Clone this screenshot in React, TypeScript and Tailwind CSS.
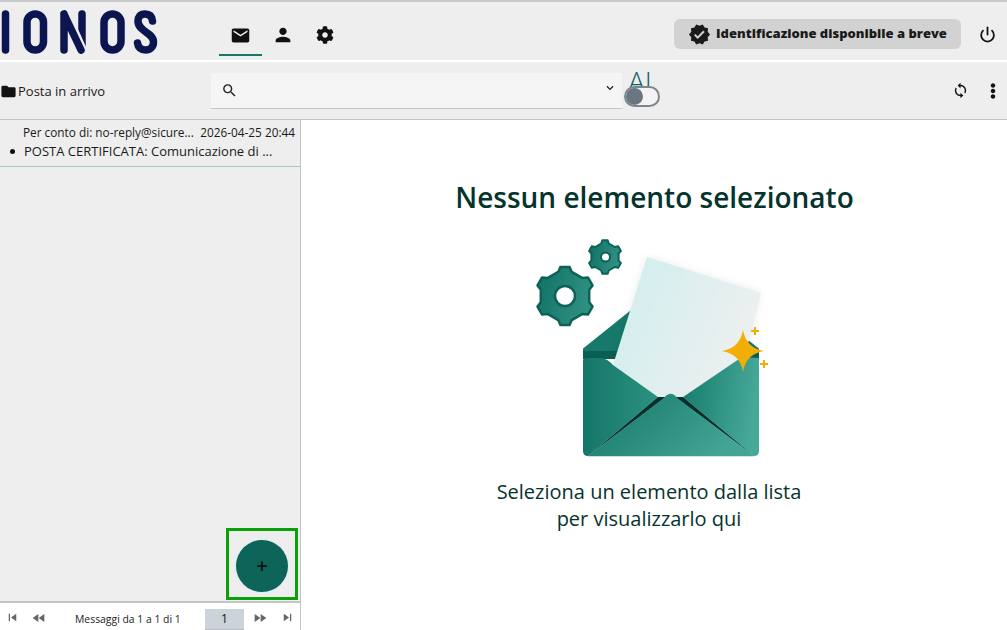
import { Power } from "lucide-react";
import {
	MdEmail,
	MdFastForward,
	MdFastRewind,
	MdFolder,
	MdPerson,
	MdSearch,
	MdSkipNext,
	MdSkipPrevious,
	MdSync,
	MdVerified,
} from "react-icons/md";
import { FaCog, FaChevronDown, FaEllipsisV } from "react-icons/fa";

const gearPath = (cx: number, cy: number, outer: number, inner: number, teeth: number) => {
	const pts: string[] = [];
	const step = (Math.PI * 2) / teeth;
	for (let i = 0; i < teeth; i++) {
		const a = i * step - Math.PI / 2;
		const list = [
			[a - step * 0.26, inner],
			[a - step * 0.15, outer],
			[a + step * 0.15, outer],
			[a + step * 0.26, inner],
		];
		list.forEach(([an, r]) => {
			pts.push(`${(cx + Math.cos(an) * r).toFixed(1)} ${(cy + Math.sin(an) * r).toFixed(1)}`);
		});
	}
	return "M" + pts.join("L") + "Z";
};

const Logo = () => (
	<svg width="158" height="44" viewBox="0 0 158 44" fill="none" stroke="#0b1550" strokeWidth="7.5" strokeLinecap="round" strokeLinejoin="round">
		<path d="M5.5 4V40" />
		<rect x="27" y="4" width="16.5" height="36" rx="8.25" />
		<path d="M82 4V40" />
		<path d="M65.5 3L84 44" stroke="#eeeeee" strokeWidth="9.5" strokeLinecap="butt" />
		<path d="M64 4V40M64 4L81 40" />
		<rect x="104" y="4" width="17" height="36" rx="8.5" />
		<path d="M152.5 11C152 6 149 4 145 4C140 4 138 7 138 11C138 22 153.500 22 153.500 32C153.500 37 150 40 145.500 40C141 40 138 37.500 137.500 33" />
	</svg>
);

const Illustration = () => (
	<svg width="260" height="235" viewBox="0 0 260 235">
		<defs>
			<linearGradient id="env" x1="0" y1="0" x2="1" y2="0.4">
				<stop offset="0" stopColor="#137567" />
				<stop offset="1" stopColor="#41a494" />
			</linearGradient>
			<linearGradient id="envL" x1="0" y1="0" x2="1" y2="0">
				<stop offset="0" stopColor="#147668" />
				<stop offset="1" stopColor="#2d9282" />
			</linearGradient>
			<linearGradient id="envR" x1="0" y1="0" x2="1" y2="0.2">
				<stop offset="0" stopColor="#167a6c" />
				<stop offset="1" stopColor="#45a898" />
			</linearGradient>
			<linearGradient id="paper" x1="0" y1="0.2" x2="1" y2="0.6">
				<stop offset="0" stopColor="#d0eeee" />
				<stop offset="1" stopColor="#efefef" />
			</linearGradient>
			<linearGradient id="gear" x1="0" y1="0" x2="1" y2="0.3">
				<stop offset="0" stopColor="#0f7063" />
				<stop offset="1" stopColor="#2f9082" />
			</linearGradient>
			<filter id="soft" x="-10%" y="-10%" width="120%" height="120%">
				<feGaussianBlur stdDeviation="4" />
			</filter>
		</defs>
		<path
			d={gearPath(45, 66, 29.5, 25, 6) + " M55 66A10 10 0 1 0 35 66A10 10 0 1 0 55 66Z"}
			fill="url(#gear)"
			fillRule="evenodd"
			stroke="#0c6256"
			strokeWidth="2.500"
			strokeLinejoin="round"
		/>
		<path
			d={gearPath(85, 27, 17, 14, 6) + " M90 27A4.500 4.500 0 1 0 81 27A4.500 4.500 0 1 0 90 27Z"}
			fill="url(#gear)"
			fillRule="evenodd"
			stroke="#0c6256"
			strokeWidth="2"
			strokeLinejoin="round"
		/>
		<path d="M64 119L150 50L238 119V128H64Z" fill="#17796b" strokeLinejoin="round" stroke="#17796b" strokeWidth="2" />
		<rect x="63" y="121" width="176" height="8" fill="#0a5f54" />
		<path d="M127 27L241 63L225 125L163 167H138L93 135Z" fill="#000" opacity="0.08" filter="url(#soft)" />
		<path d="M127 27L241 63L225 125L163 167H138L93 135Z" fill="url(#paper)" />
		<path d="M63 130Q63 128 70 128H80Q87 128 93 135L138 167L68 226Q63 226 63 221Z" fill="url(#envL)" />
		<path d="M239 128V221Q239 226 234 226L163 167L222 127Z" fill="url(#envR)" />
		<path d="M138 167L68 226L146 167Z" fill="#06302b" />
		<path d="M163 167L234 226L155 167Z" fill="#06302b" />
		<path d="M68 226L143 169Q151 159 158 169L234 226Z" fill="url(#env)" stroke="url(#env)" strokeLinejoin="round" strokeWidth="0.500" />
		<path d="M223 100Q226 118 244 121Q226 124 223 142Q220 124 202 121Q220 118 223 100Z" fill="#f2ae07" />
		<path d="M235 97V105M231 101H239M244 130V138M240 134H248" stroke="#f2ae07" strokeWidth="2" />
	</svg>
);

const App = () => {
	return (
		<div className="w-[1007px] h-[630px] overflow-hidden bg-white flex flex-col font-['Open_Sans',sans-serif] text-[#1a1a1a]">
			<header className="h-[60px] shrink-0 bg-[#eeeeee] border-t-2 border-[#c9c9c9] flex items-start">
				<div className="w-[219px] pt-[8px] shrink-0">
					<Logo />
				</div>
				<div className="w-[43px] h-[54px] pt-[23px] flex justify-center border-b-2 border-[#15786b]">
					<MdEmail size={21} className="text-[#111]" />
				</div>
				<div className="w-[42px] pt-[22px] flex justify-center">
					<MdPerson size={22} className="text-[#111]" />
				</div>
				<div className="w-[42px] pt-[24px] flex justify-center">
					<FaCog size={18} className="text-[#111]" />
				</div>
				<div className="ml-auto mt-[17px] w-[287px] h-[30px] rounded-md bg-[#d2d2d2] flex items-center justify-center gap-[5px] font-extrabold text-[13px]">
					<MdVerified size={23} className="text-[#1a1a1a]" />
					<span>Identificazione disponibile a breve</span>
				</div>
				<div className="w-[46px] pt-[24px] flex justify-center">
					<Power size={17} strokeWidth={2.5} className="text-[#111] ml-[6px]" />
				</div>
			</header>
			<div className="h-[58px] mt-[2px] shrink-0 bg-[#eeeeee] border-b border-[#bfc4c6] flex items-center">
				<div className="w-[211px] shrink-0 flex items-center text-[13px] pt-[2px]">
					<MdFolder size={17} className="text-[#111]" />
					<span className="ml-[1px]">Posta in arrivo</span>
				</div>
				<div className="w-[411px] h-[36px] bg-[#f5f5f5] border-b border-[#c6c6c6] flex items-center justify-between pl-[10px] pr-[8px] mt-[1px]">
					<MdSearch size={17} className="text-[#222]" />
					<FaChevronDown size={8} className="text-[#222] mb-[5px]" />
				</div>
				<div className="relative w-[36px] h-[36px] ml-[2px]">
					<span className="absolute left-[4px] -top-[6px] text-[28px] leading-[28px] font-light text-[#0f5f6a]">AI</span>
					<div className="absolute left-0 top-[13px] w-[36px] h-[21px] rounded-full bg-[#f4f4f4] border-2 border-[#7d8791] flex items-center">
						<div className="w-[17px] h-[17px] rounded-full bg-[#6c7683]"></div>
					</div>
				</div>
				<MdSync size={17} className="ml-[292px] text-[#111]" />
				<FaEllipsisV size={16} className="ml-[16px] text-[#111]" />
			</div>
			<div className="flex-1 flex min-h-0">
				<aside className="w-[301px] shrink-0 bg-[#eeeeee] border-r border-[#bfc4c6] flex flex-col">
					<div className="h-[47px] border-b border-[#a9c6c0] pt-[4px] shrink-0">
						<div className="flex justify-between pl-[23px] pr-[5px] text-[11.800px] leading-[16px]">
							<span>Per conto di: no-reply@sicure...</span>
							<span>2026-04-25 20:44</span>
						</div>
						<div className="flex items-center pl-[10px] text-[13px] leading-[18px] mt-[2px]">
							<span className="w-[5px] h-[5px] rounded-full bg-[#111] mr-[9px]"></span>
							<span>POSTA CERTIFICATA: Comunicazione di ...</span>
						</div>
					</div>
					<div className="flex-1 flex justify-end items-end pr-[2px] pb-[1px]">
						<div className="w-[72px] h-[72px] border-[3px] border-[#0aa00a] flex justify-center pt-[9px]">
							<button className="w-[52px] h-[52px] rounded-full bg-[#0d655a] text-[#111] text-[20px] font-semibold leading-none shadow-[0_0_3px_#cfe9f5]">+</button>
						</div>
					</div>
					<div className="h-[29px] shrink-0 border-t-2 border-[#c4c4c4] bg-white flex items-end text-[10.400px] text-[#222]">
						<div className="h-full flex items-center pt-[2px]">
							<MdSkipPrevious size={15} className="ml-[5px] text-[#666]" />
							<MdFastRewind size={16} className="ml-[11px] text-[#666]" />
						</div>
						<span className="h-full flex items-center ml-[28px] w-[130px] pt-[6px]">Messaggi da 1 a 1 di 1</span>
						<div className="w-[39px] h-[21px] bg-[#cdd3da] border-b border-[#bbb] text-[13px] flex items-center justify-center">1</div>
						<div className="h-full flex items-center pt-[2px]">
							<MdFastForward size={16} className="ml-[8px] text-[#666]" />
							<MdSkipNext size={15} className="ml-[12px] text-[#666]" />
						</div>
					</div>
				</aside>
				<main className="flex-1 flex flex-col items-center pt-[59px]">
					<h1 className="text-[28px] leading-[36px] font-semibold text-[#05342c] ml-[1px]">Nessun elemento selezionato</h1>
					<div className="mt-[15px] -ml-[8px]">
						<Illustration />
					</div>
					<p className="mt-[13px] pr-[10px] text-[20px] leading-[27px] text-[#05342c] text-center">
						Seleziona un elemento dalla lista
						<br />
						per visualizzarlo qui
					</p>
				</main>
			</div>
		</div>
	);
};

export default App;
